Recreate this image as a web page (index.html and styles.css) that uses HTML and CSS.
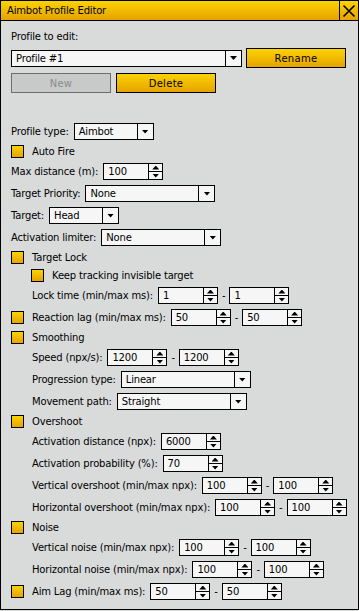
FILE: index.html
```html
<!DOCTYPE html>
<html lang="en">
<head>
    <meta charset="UTF-8">
    <title>Aimbot Profile Editor</title>
    <link rel="stylesheet" href="styles.css">
</head>
<body>
    <div class="window">
        <div class="titlebar">
            <span class="title">Aimbot Profile Editor</span>
            <span class="close">
                <svg width="18" height="19" viewBox="0 0 18 19"><path d="M3.5 4.5 L14.5 15.5 M14.5 4.5 L3.5 15.5" stroke="#000" stroke-width="1.6"/></svg>
            </span>
        </div>
        <div class="content">
            <div class="label">Profile to edit:</div>
            <div class="top-row">
                <div class="select profile"><span class="val">Profile #1</span><span class="arrow"></span></div>
                <button class="btn">Rename</button>
            </div>
            <div class="top-row">
                <button class="btn disabled">New</button>
                <button class="btn">Delete</button>
            </div>

            <div class="form">
                <div class="row">
                    <span class="lbl">Profile type:</span>
                    <div class="select" style="width:80px"><span class="val">Aimbot</span><span class="arrow"></span></div>
                </div>
                <div class="row check"><span class="box"></span><span>Auto Fire</span></div>
                <div class="row">
                    <span class="lbl">Max distance (m):</span>
                    <div class="spin"><span class="val">100</span><span class="btns"><i class="up"></i><i class="down"></i></span></div>
                </div>
                <div class="row">
                    <span class="lbl">Target Priority:</span>
                    <div class="select"><span class="val">None</span><span class="arrow"></span></div>
                </div>
                <div class="row">
                    <span class="lbl">Target:</span>
                    <div class="select" style="width:70px"><span class="val">Head</span><span class="arrow"></span></div>
                </div>
                <div class="row">
                    <span class="lbl">Activation limiter:</span>
                    <div class="select" style="width:120px"><span class="val">None</span><span class="arrow"></span></div>
                </div>

                <!-- Target lock -->
                <div class="row check"><span class="box"></span><span>Target Lock</span></div>
                <div class="row check sub-box"><span class="box"></span><span>Keep tracking invisible target</span></div>
                <div class="row sub">
                    <span class="lbl">Lock time (min/max ms):</span>
                    <div class="spin"><span class="val">1</span><span class="btns"><i class="up"></i><i class="down"></i></span></div>
                    <span class="dash">-</span>
                    <div class="spin"><span class="val">1</span><span class="btns"><i class="up"></i><i class="down"></i></span></div>
                </div>
                <div class="row">
                    <span class="box"></span>
                    <span class="lbl">Reaction lag (min/max ms):</span>
                    <div class="spin"><span class="val">50</span><span class="btns"><i class="up"></i><i class="down"></i></span></div>
                    <span class="dash">-</span>
                    <div class="spin"><span class="val">50</span><span class="btns"><i class="up"></i><i class="down"></i></span></div>
                </div>

                <!-- Smoothing -->
                <div class="row check"><span class="box"></span><span>Smoothing</span></div>
                <div class="row sub">
                    <span class="lbl">Speed (npx/s):</span>
                    <div class="spin"><span class="val">1200</span><span class="btns"><i class="up"></i><i class="down"></i></span></div>
                    <span class="dash">-</span>
                    <div class="spin"><span class="val">1200</span><span class="btns"><i class="up"></i><i class="down"></i></span></div>
                </div>
                <div class="row sub">
                    <span class="lbl">Progression type:</span>
                    <div class="select"><span class="val">Linear</span><span class="arrow"></span></div>
                </div>
                <div class="row sub">
                    <span class="lbl">Movement path:</span>
                    <div class="select"><span class="val">Straight</span><span class="arrow"></span></div>
                </div>

                <!-- Overshoot -->
                <div class="row check"><span class="box"></span><span>Overshoot</span></div>
                <div class="row sub">
                    <span class="lbl">Activation distance (npx):</span>
                    <div class="spin"><span class="val">6000</span><span class="btns"><i class="up"></i><i class="down"></i></span></div>
                </div>
                <div class="row sub">
                    <span class="lbl">Activation probability (%):</span>
                    <div class="spin"><span class="val">70</span><span class="btns"><i class="up"></i><i class="down"></i></span></div>
                </div>
                <div class="row sub">
                    <span class="lbl">Vertical overshoot (min/max npx):</span>
                    <div class="spin"><span class="val">100</span><span class="btns"><i class="up"></i><i class="down"></i></span></div>
                    <span class="dash">-</span>
                    <div class="spin"><span class="val">100</span><span class="btns"><i class="up"></i><i class="down"></i></span></div>
                </div>
                <div class="row sub">
                    <span class="lbl">Horizontal overshoot (min/max npx):</span>
                    <div class="spin"><span class="val">100</span><span class="btns"><i class="up"></i><i class="down"></i></span></div>
                    <span class="dash">-</span>
                    <div class="spin"><span class="val">100</span><span class="btns"><i class="up"></i><i class="down"></i></span></div>
                </div>

                <!-- Noise -->
                <div class="row check"><span class="box"></span><span>Noise</span></div>
                <div class="row sub">
                    <span class="lbl">Vertical noise (min/max npx):</span>
                    <div class="spin"><span class="val">100</span><span class="btns"><i class="up"></i><i class="down"></i></span></div>
                    <span class="dash">-</span>
                    <div class="spin"><span class="val">100</span><span class="btns"><i class="up"></i><i class="down"></i></span></div>
                </div>
                <div class="row sub">
                    <span class="lbl">Horizontal noise (min/max npx):</span>
                    <div class="spin"><span class="val">100</span><span class="btns"><i class="up"></i><i class="down"></i></span></div>
                    <span class="dash">-</span>
                    <div class="spin"><span class="val">100</span><span class="btns"><i class="up"></i><i class="down"></i></span></div>
                </div>
                <div class="row">
                    <span class="box"></span>
                    <span class="lbl">Aim Lag (min/max ms):</span>
                    <div class="spin"><span class="val">50</span><span class="btns"><i class="up"></i><i class="down"></i></span></div>
                    <span class="dash">-</span>
                    <div class="spin"><span class="val">50</span><span class="btns"><i class="up"></i><i class="down"></i></span></div>
                </div>
            </div>
        </div>
    </div>
</body>
</html>
```

FILE: styles.css
```css
html, body {
    margin: 0;
    background: #d9dbdb;
}
body {
    font-family: "DejaVu Sans", sans-serif;
    font-size: 10px;
    letter-spacing: -0.18px;
    color: #000;
}
.window {
    width: 359px;
    height: 610px;
    box-sizing: border-box;
    border: 1px solid #000;
    background: #d9dbdb;
}
.titlebar {
    display: flex;
    height: 20px;
    box-sizing: border-box;
    border-bottom: 1px solid #000;
    background: linear-gradient(#fbd300, #e6a300);
}
.title {
    flex: 1;
    padding-left: 6px;
    line-height: 19px;
}
.close {
    width: 19px;
    box-sizing: border-box;
    border-left: 1px solid #000;
    display: flex;
}
.content {
    padding: 10px 10px 0 10px;
}
.label {
    line-height: 12px;
    margin-bottom: 5px;
}
.top-row {
    display: flex;
    align-items: center;
    gap: 4px;
    margin-bottom: 5px;
}
.top-row + .top-row {
    gap: 5px;
}
.btn {
    width: 100px;
    height: 20px;
    padding: 0;
    border: 1px solid #000;
    background: linear-gradient(#fbd300, #e6a300);
    font-family: "DejaVu Sans", sans-serif;
    font-size: 10px;
    letter-spacing: 0.3px;
    color: #000;
}
.btn.disabled {
    background: #c8caca;
    border-color: #6e6e6e;
    color: #8a8a8a;
}

/* select box */
.select {
    display: flex;
    width: 130px;
    height: 17px;
    box-sizing: border-box;
    border: 1px solid #000;
    background: #f6f6f6;
}
.select.profile {
    width: 231px;
}
.select .val, .spin .val {
    flex: 1;
    padding-left: 4px;
    line-height: 15px;
    white-space: nowrap;
}
.select .arrow {
    width: 16px;
    box-sizing: border-box;
    border-left: 1px solid #000;
    display: flex;
    align-items: center;
    justify-content: center;
}
.select .arrow::before {
    content: "";
    width: 7px;
    height: 4px;
    background: #000;
    clip-path: polygon(0 0, 100% 0, 50% 100%);
}

/* spin box */
.spin {
    display: flex;
    width: 60px;
    height: 17px;
    box-sizing: border-box;
    border: 1px solid #000;
    background: #f6f6f6;
}
.btns {
    width: 14px;
    box-sizing: border-box;
    border-left: 1px solid #000;
    display: flex;
    flex-direction: column;
}
.btns i {
    flex: 1;
    display: flex;
    align-items: center;
    justify-content: center;
}
.btns .down {
    border-top: 1px solid #000;
}
.btns i::before {
    content: "";
    width: 7px;
    height: 4px;
    background: #000;
}
.btns .up::before {
    clip-path: polygon(50% 0, 100% 100%, 0 100%);
}
.btns .down::before {
    clip-path: polygon(0 0, 100% 0, 50% 100%);
}

/* form rows */
.form {
    margin-top: 30px;
    display: flex;
    flex-direction: column;
    gap: 5px;
}
.row {
    display: flex;
    align-items: center;
    height: 17px;
    white-space: nowrap;
}
.row.check {
    height: 13px;
}
.row.sub {
    padding-left: 21px;
}
.row.sub-box {
    padding-left: 20px;
}
.box {
    width: 13px;
    height: 13px;
    box-sizing: border-box;
    border: 1px solid #000;
    background: linear-gradient(#fbd300, #e6a300);
    margin-right: 8px;
    flex: none;
}
.lbl {
    margin-right: 5px;
}
.dash {
    margin: 0 4px;
}
```
